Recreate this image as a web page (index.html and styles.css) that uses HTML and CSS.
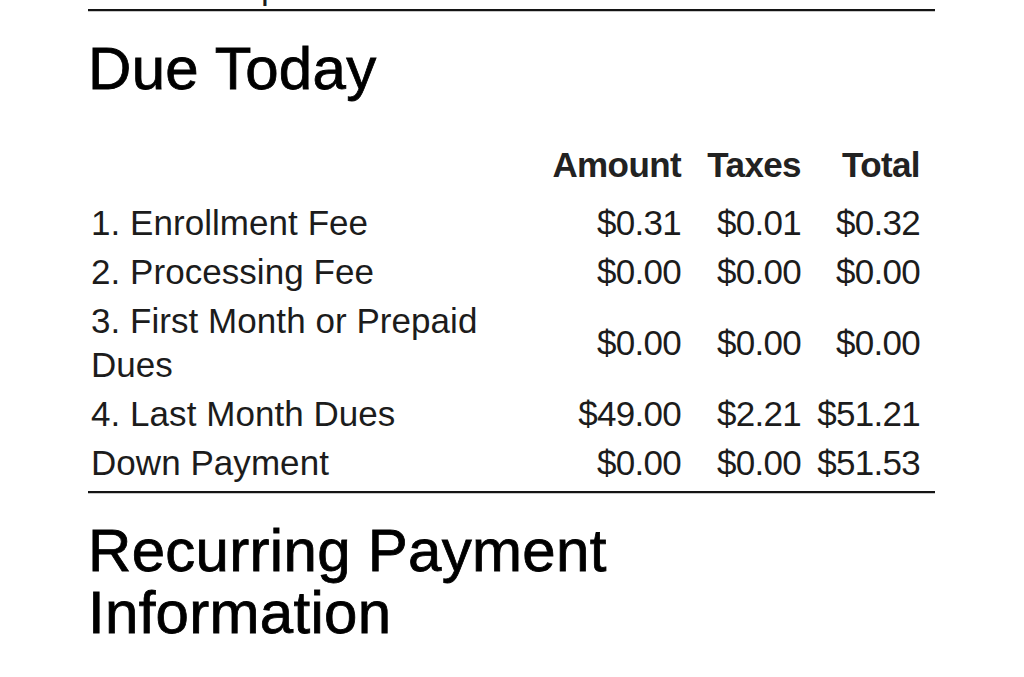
FILE: index.html
```html
<!DOCTYPE html>
<html lang="en">
<head>
<meta charset="utf-8">
<title>Due Today</title>
<link rel="stylesheet" href="styles.css">
</head>
<body>
<div class="page">
  <p class="prev-line">Membership</p>
  <hr class="rule">
  <h2 class="section-title">Due Today</h2>
  <table class="fees">
    <colgroup>
      <col class="c-label">
      <col class="c-amount">
      <col class="c-taxes">
      <col class="c-total">
      <col class="c-pad">
    </colgroup>
    <thead>
      <tr class="head-row">
        <th class="label"></th>
        <th class="num">Amount</th>
        <th class="num">Taxes</th>
        <th class="num">Total</th>
        <th></th>
      </tr>
    </thead>
    <tbody>
      <tr class="row">
        <td class="label">1. Enrollment Fee</td>
        <td class="num">$0.31</td>
        <td class="num">$0.01</td>
        <td class="num">$0.32</td>
        <td></td>
      </tr>
      <tr class="row">
        <td class="label">2. Processing Fee</td>
        <td class="num">$0.00</td>
        <td class="num">$0.00</td>
        <td class="num">$0.00</td>
        <td></td>
      </tr>
      <tr class="row">
        <td class="label">3. First Month or Prepaid Dues</td>
        <td class="num">$0.00</td>
        <td class="num">$0.00</td>
        <td class="num">$0.00</td>
        <td></td>
      </tr>
      <tr class="row">
        <td class="label">4. Last Month Dues</td>
        <td class="num">$49.00</td>
        <td class="num">$2.21</td>
        <td class="num">$51.21</td>
        <td></td>
      </tr>
      <tr class="row">
        <td class="label">Down Payment</td>
        <td class="num">$0.00</td>
        <td class="num">$0.00</td>
        <td class="num">$51.53</td>
        <td></td>
      </tr>
    </tbody>
  </table>
  <hr class="rule rule-bottom">
  <h2 class="section-title">Recurring Payment Information</h2>
</div>
</body>
</html>
```

FILE: styles.css
```css
html, body {
  margin: 0;
  padding: 0;
  background: #ffffff;
}

body {
  font-family: "Liberation Sans", Arial, Helvetica, sans-serif;
  color: #1c1c1c;
  overflow: hidden;
}

.page {
  width: 847px;
  margin-left: 88px;
}

.prev-line {
  margin: -34.6px 0 0 0;
  font-size: 35px;
  line-height: 44px;
  color: #1c1c1c;
}

.rule {
  margin: 0;
  height: 0;
  border: 0;
  border-top: 2px solid #141414;
  border-bottom: 1px solid #c8c8c8;
}

.rule-bottom {
  margin-top: 3px;
}

.section-title {
  margin: 26px 0 0 0;
  font-size: 60px;
  line-height: 62px;
  font-weight: 400;
  color: #000000;
  -webkit-text-stroke: 0.8px #000000;
  letter-spacing: 0.3px;
  width: 560px;
}

.fees {
  width: 847px;
  table-layout: fixed;
  border-collapse: collapse;
  margin-top: 43px;
  font-size: 35px;
  line-height: 44px;
}

.c-label { width: 460px; }
.c-amount { width: 133px; }
.c-taxes { width: 120px; }
.c-total { width: 119px; }
.c-pad { width: 15px; }

.fees th,
.fees td {
  padding: 0;
  vertical-align: middle;
}

.head-row th {
  font-weight: 700;
  color: #222222;
  padding-bottom: 11.5px;
  white-space: nowrap;
  letter-spacing: -0.6px;
}

.row td {
  padding-top: 2.5px;
  padding-bottom: 2.5px;
  color: #1c1c1c;
}

.row td.label {
  padding-left: 3px;
  text-align: left;
  letter-spacing: 0.05px;
}

.num {
  text-align: right;
  white-space: nowrap;
}

.row td.num {
  letter-spacing: -0.7px;
}
```
